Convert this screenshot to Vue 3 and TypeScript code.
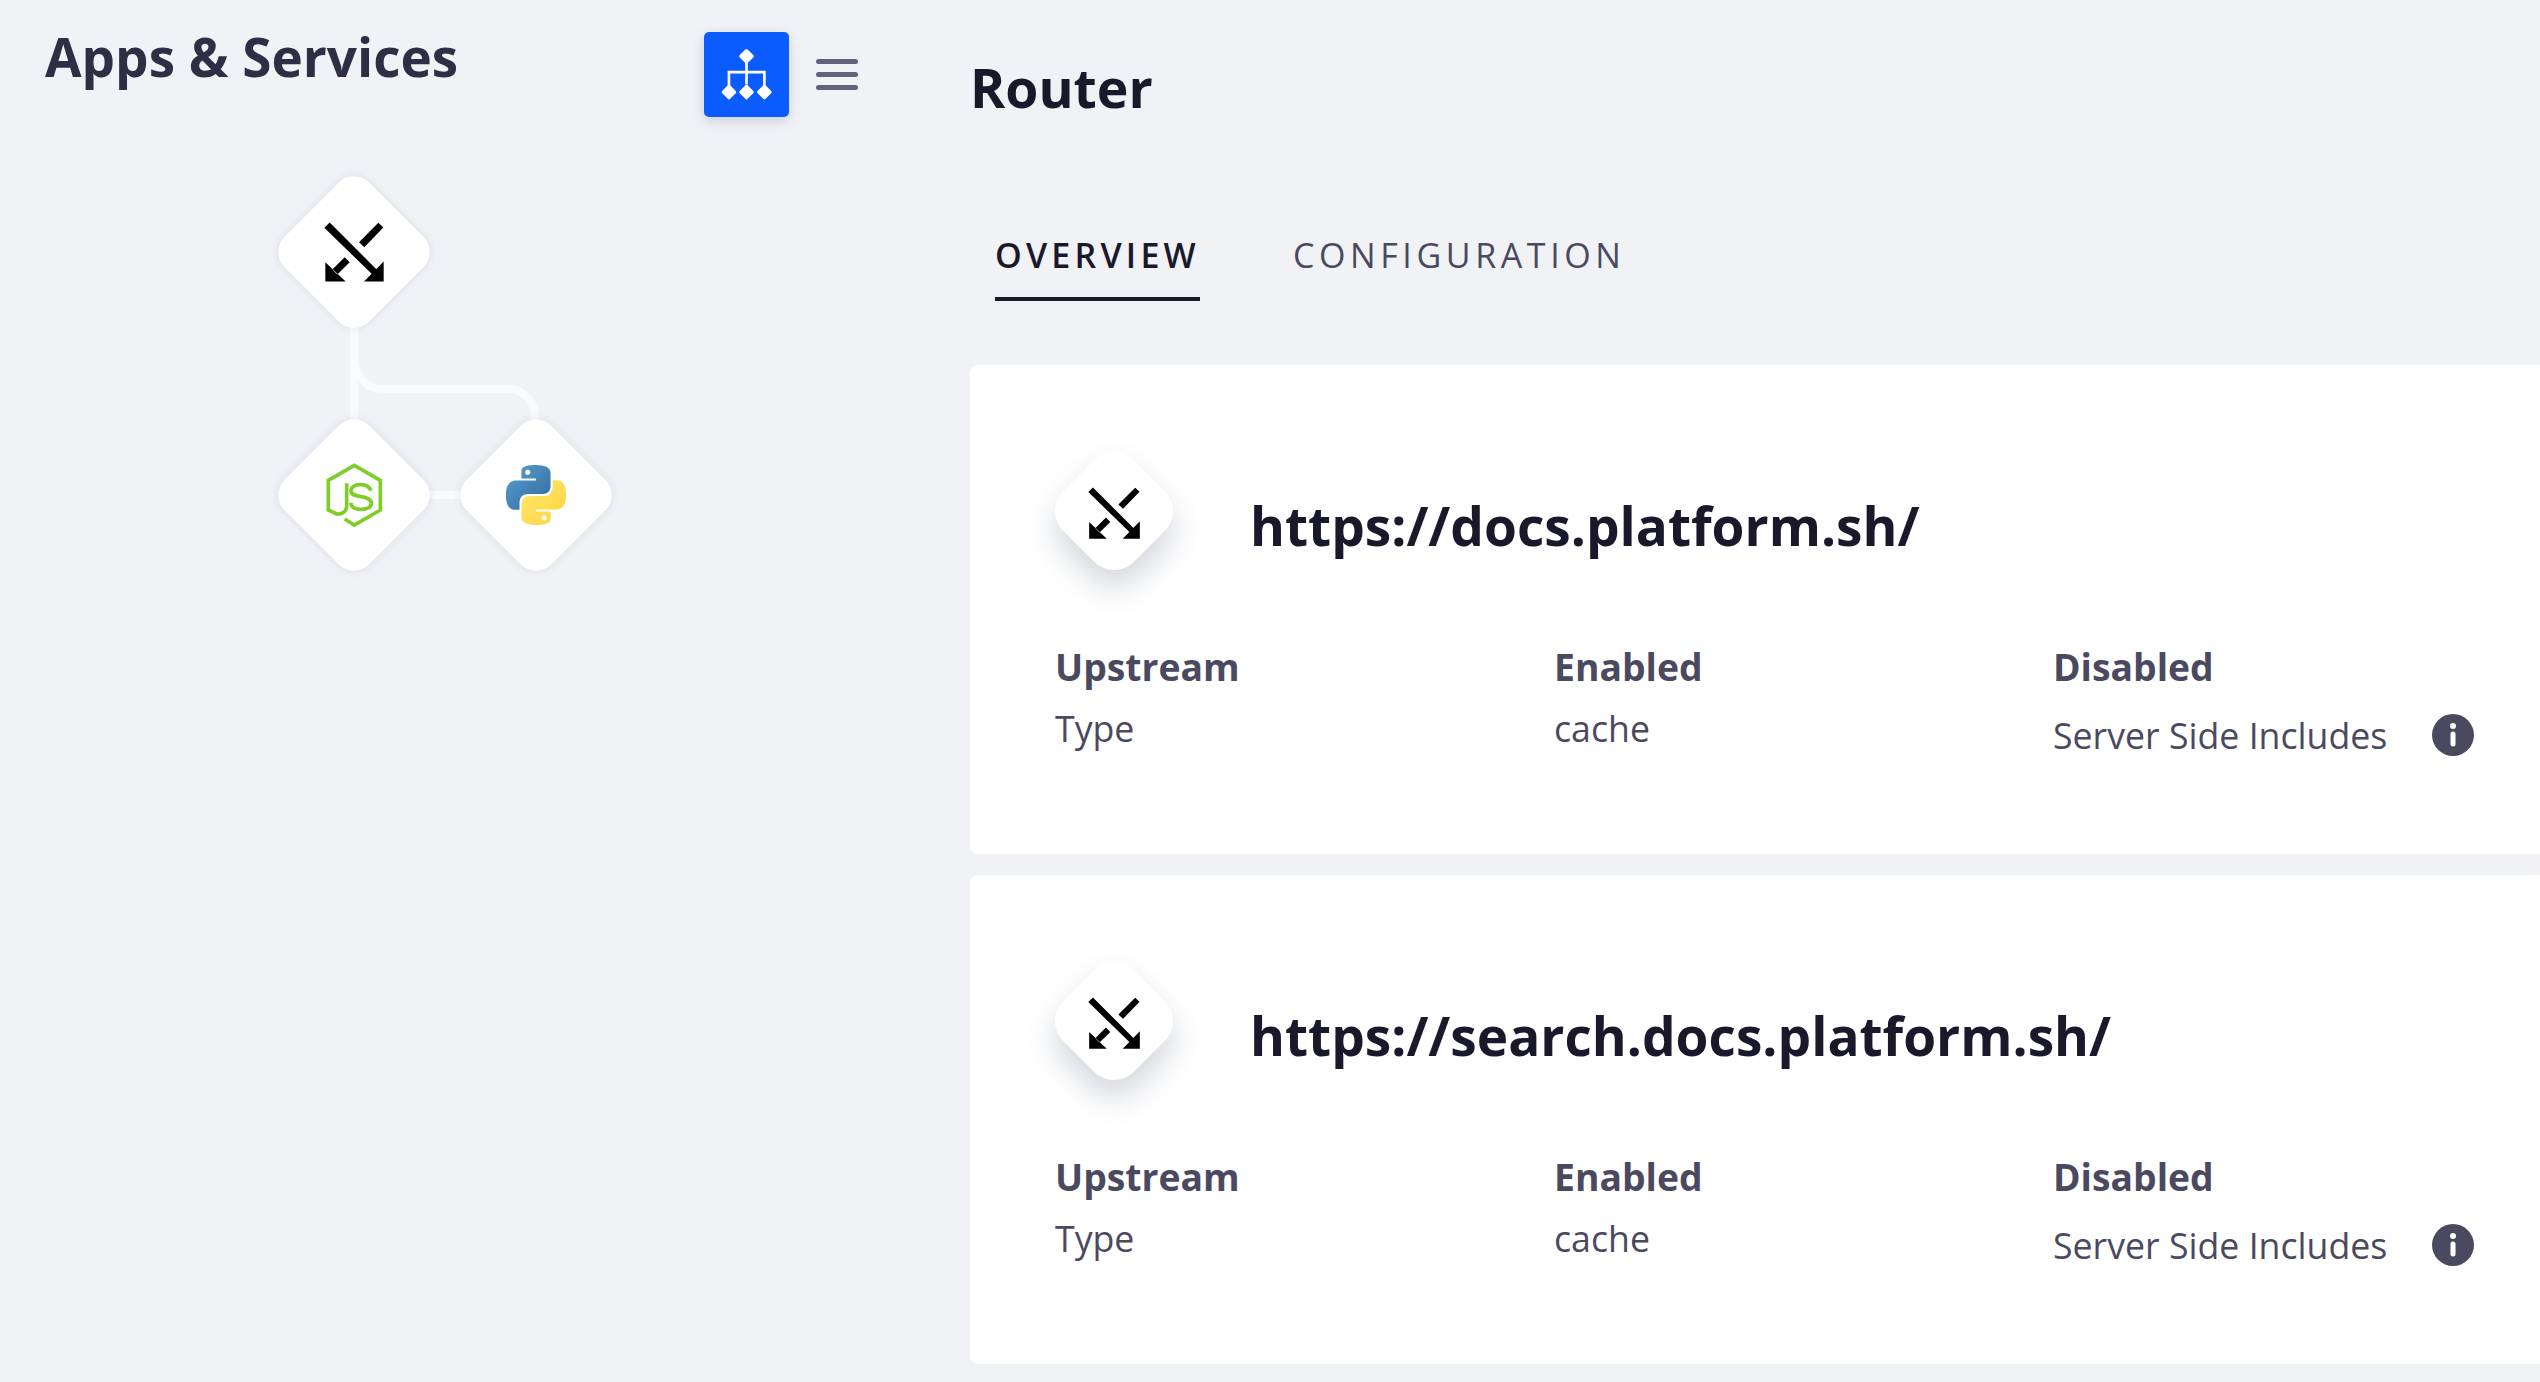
<template>
  <div class="page">
    <aside class="sidebar">
      <div class="sidebar-head">
        <h2>Apps &amp; Services</h2>
        <div class="view-actions">
          <button class="view-btn">
            <svg viewBox="120 85 160 160" width="53" height="53">
              <path d="M200 110V195M147 200V158H254V200" fill="none" stroke="#fff" stroke-width="8" />
              <rect v-for="d in treeDots" :key="d[0] + '-' + d[1]" :x="d[0] - 17" :y="d[1] - 17" width="34" height="34" rx="5"
                fill="#fff" :transform="`rotate(45 ${d[0]} ${d[1]})`" />
            </svg>
          </button>
          <div class="burger"><span></span><span></span><span></span></div>
        </div>
      </div>

      <div class="tree">
        <svg class="links" width="400" height="400" viewBox="0 0 400 400">
          <path d="M78 80V330M78 130V181C78 200 90 213 107 213H232C248 213 259 225 259 242V250M130 319H230" fill="none" stroke="#f9fafc"
            stroke-width="8" />
        </svg>

        <div class="node node-router">
          <div class="diamond"></div>
          <svg viewBox="25 30 183 182" width="61" height="61"><path :d="routerIcon" fill="#000" /></svg>
        </div>

        <div class="node node-js">
          <div class="diamond"></div>
          <svg viewBox="-6 3 240 240" width="80" height="80">
            <path d="M86 195L115 213L193 168V79L115 34L37 79V168L62 180C80 182 92 172 92 155V88" fill="none" stroke="#80cc28"
              stroke-width="11" />
            <path d="M165 110C160 97 148 92 133 92C115 92 104 100 105 111C106 122 116 125 135 128C154 131 166 135 166 148C166 160 152 166 135 166C118 166 106 160 104 146"
              fill="none" stroke="#80cc28" stroke-width="11" />
          </svg>
        </div>

        <div class="node node-py">
          <div class="diamond"></div>
          <svg viewBox="0 0 24 24" width="60" height="60">
            <defs>
              <linearGradient id="pyBlue" x1="0" y1="0" x2="1" y2="1">
                <stop offset="0" stop-color="#5a9fd4" />
                <stop offset="1" stop-color="#306998" />
              </linearGradient>
              <linearGradient id="pyYellow" x1="0" y1="0" x2="1" y2="1">
                <stop offset="0" stop-color="#ffe873" />
                <stop offset="1" stop-color="#ffd43b" />
              </linearGradient>
            </defs>
            <path :d="pyTop" fill="url(#pyBlue)" />
            <path :d="pyBottom" fill="url(#pyYellow)" />
          </svg>
        </div>
      </div>
    </aside>

    <main class="main">
      <h1>Router</h1>

      <nav class="tabs">
        <span v-for="t in tabs" :key="t" class="tab" :class="{ active: t === activeTab }">{{ t }}</span>
      </nav>

      <section v-for="route in routes" :key="route" class="card">
        <div class="card-head">
          <div class="route-icon">
            <div class="route-diamond"></div>
            <svg viewBox="25 30 183 182" width="53" height="53"><path :d="routerIcon" fill="#000" /></svg>
          </div>
          <h3>{{ route }}</h3>
        </div>

        <div class="facts">
          <div class="fact">
            <strong>Upstream</strong>
            <span>Type</span>
          </div>
          <div class="fact">
            <strong>Enabled</strong>
            <span>cache</span>
          </div>
          <div class="fact">
            <strong>Disabled</strong>
            <div class="fact-row">
              <span>Server Side Includes</span>
              <svg class="info" viewBox="0 0 42 42" width="42" height="42">
                <circle cx="21" cy="21" r="21" fill="#4b495f" />
                <circle cx="21" cy="12" r="3" fill="#fff" />
                <rect x="18.500" y="17.500" width="5" height="15" rx="2.500" fill="#fff" />
              </svg>
            </div>
          </div>
        </div>
      </section>
    </main>
  </div>
</template>

<script setup lang="ts">
const tabs = ["OVERVIEW", "CONFIGURATION"];
const activeTab = "OVERVIEW";
const routes = ["https://docs.platform.sh/", "https://search.docs.platform.sh/"];

const treeDots = [
  [200, 110],
  [147, 218],
  [200, 218],
  [254, 218],
];

// router glyph, coords taken from a 3x crop
const routerIcon =
  "M26 47L42 31L182 171L168 185ZM204 148V208H145ZM188 32L203 46L146 105L130 90ZM87 135L102 150L65 187L50 172ZM29 150V208H90Z";

const pyTop =
  "M14.25.18l.9.2.73.26.59.3.45.32.34.34.25.34.16.33.1.3.04.26.02.2-.01.13V8.5l-.05.63-.13.55-.21.46-.26.38-.3.31-.33.25-.35.19-.35.14-.33.1-.3.07-.26.04-.21.02H8.77l-.69.05-.59.14-.5.22-.41.27-.33.32-.27.35-.2.36-.15.37-.1.35-.07.32-.04.27-.02.21v3.06H3.17l-.21-.03-.28-.07-.32-.12-.35-.18-.36-.26-.36-.36-.35-.46-.32-.59-.28-.73-.21-.88-.14-1.05-.05-1.23.06-1.22.16-1.04.24-.87.32-.71.36-.57.4-.44.42-.33.42-.24.4-.16.36-.1.32-.05.24-.01h.16l.06.01h8.16v-.83H6.18l-.01-2.75-.02-.37.05-.34.11-.31.17-.28.25-.26.31-.23.38-.2.44-.18.51-.15.58-.12.64-.1.71-.06.77-.04.84-.02 1.27.05zm-6.3 1.98l-.23.33-.08.41.08.41.23.34.33.22.41.09.41-.09.33-.22.23-.34.08-.41-.08-.41-.23-.33-.33-.22-.41-.09-.41.09z";
const pyBottom =
  "M21.04 6.11l.28.06.32.12.35.18.36.27.36.35.35.47.32.59.28.73.21.88.14 1.04.05 1.23-.06 1.23-.16 1.04-.24.86-.32.71-.36.57-.4.45-.42.33-.42.24-.4.16-.36.09-.32.05-.24.02-.16-.01h-8.22v.82h5.84l.01 2.76.02.36-.05.34-.11.31-.17.29-.25.25-.31.24-.38.2-.44.17-.51.15-.58.13-.64.09-.71.07-.77.04-.84.01-1.27-.04-1.07-.14-.9-.2-.73-.25-.59-.3-.45-.33-.34-.34-.25-.34-.16-.33-.1-.3-.04-.25-.02-.2.01-.13v-5.34l.05-.64.13-.54.21-.46.26-.38.3-.32.33-.24.35-.2.35-.14.33-.1.3-.06.26-.04.21-.02.13-.01h5.84l.69-.05.59-.14.5-.21.41-.28.33-.32.27-.35.2-.36.15-.36.1-.35.07-.32.04-.28.02-.21V6.07h2.09l.14.01zm-6.47 14.25l-.23.33-.08.41.08.41.23.33.33.23.41.08.41-.08.33-.23.23-.33.08-.41-.08-.41-.23-.33-.33-.23-.41-.08-.41.08z";
</script>

<style>
html,
body {
  margin: 0;
  background: #f0f2f6;
}
</style>

<style scoped>
.page {
  display: flex;
  width: 100vw;
  height: 100vh;
  overflow: hidden;
  background: #f0f2f6;
  font-family: "Open Sans", "Noto Sans", sans-serif;
}
.sidebar {
  flex: 0 0 970px;
  box-sizing: border-box;
  padding: 20px 0 0 45px;
}
.sidebar-head {
  display: flex;
  justify-content: space-between;
  width: 813px;
}
.sidebar-head h2 {
  margin: 0;
  font-size: 53px;
  line-height: 74px;
  font-weight: 700;
  color: #302e45;
}
.view-actions {
  display: flex;
  align-items: center;
  gap: 27px;
  margin-top: 12px;
}
.view-btn {
  display: flex;
  align-items: center;
  justify-content: center;
  width: 85px;
  height: 85px;
  padding: 0;
  border: none;
  border-radius: 5px;
  background: #0a5cff;
  box-shadow: 0 4px 12px rgba(60, 70, 100, 0.2);
}
.burger {
  display: flex;
  flex-direction: column;
  gap: 8px;
}
.burger span {
  display: block;
  width: 42px;
  height: 5px;
  border-radius: 3px;
  background: #64627a;
}
.tree {
  position: relative;
  width: 400px;
  height: 400px;
  margin: 59px 0 0 231px;
}
.links {
  position: absolute;
  left: 0;
  top: 0;
}
.node {
  position: absolute;
  display: flex;
  align-items: center;
  justify-content: center;
  width: 152px;
  height: 152px;
}
.node svg {
  position: relative;
}
.diamond {
  position: absolute;
  left: 16px;
  top: 16px;
  width: 120px;
  height: 120px;
  border-radius: 22px;
  background: #fff;
  transform: rotate(45deg);
  box-shadow: 0 0 8px rgba(60, 70, 100, 0.12);
}
.node-router {
  left: 2px;
  top: 0;
}
.node-js {
  left: 2px;
  top: 243px;
}
.node-py {
  left: 184px;
  top: 243px;
}
.main {
  flex: 0 0 1700px;
  padding-top: 47px;
}
.main h1 {
  margin: 0;
  font-size: 53.500px;
  line-height: 82px;
  font-weight: 700;
  color: #1a192b;
}
.tabs {
  display: flex;
  gap: 93px;
  margin: 103px 0 0 25px;
}
.tab {
  padding-bottom: 19px;
  border-bottom: 4px solid transparent;
  font-size: 34px;
  line-height: 46px;
  letter-spacing: 4.600px;
  color: #4b495f;
}
.tab.active {
  border-bottom-color: #1a192b;
  font-weight: 600;
  letter-spacing: 4.200px;
  color: #1a192b;
}
.card {
  box-sizing: border-box;
  height: 489px;
  margin-top: 21px;
  padding: 86px 0 0 85px;
  border-radius: 8px 0 0 8px;
  background: #fff;
}
.tabs + .card {
  margin-top: 64px;
}
.card-head {
  display: flex;
  align-items: flex-start;
  gap: 76px;
  margin-left: -1px;
}
.card-head h3 {
  margin: 37px 0 0;
  font-size: 53.200px;
  line-height: 76px;
  font-weight: 700;
  color: #1a192b;
}
.route-icon {
  position: relative;
  display: flex;
  align-items: center;
  justify-content: center;
  width: 120px;
  height: 120px;
}
.route-icon svg {
  position: relative;
  top: 2px;
}
.route-diamond {
  position: absolute;
  left: 10px;
  top: 10px;
  width: 100px;
  height: 100px;
  border-radius: 28px;
  background: #fff;
  transform: rotate(45deg);
  box-shadow: 12px 12px 30px rgba(60, 75, 105, 0.22);
}
.facts {
  display: grid;
  grid-template-columns: repeat(3, 499px);
  margin-top: 70px;
}
.fact {
  display: flex;
  flex-direction: column;
  gap: 9px;
  color: #4b495f;
  font-size: 35.700px;
  line-height: 52px;
}
.fact strong {
  font-size: 37.300px;
  font-weight: 700;
}
.fact-row {
  display: flex;
  align-items: center;
  gap: 45px;
  margin-top: 7px;
}
</style>
